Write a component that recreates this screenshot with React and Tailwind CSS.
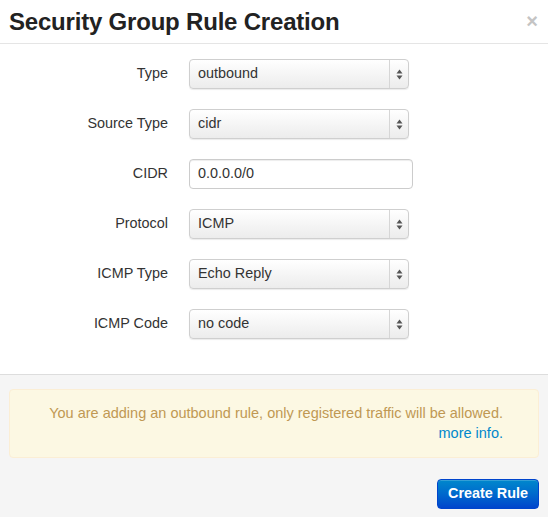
import React from 'react';

const font = { fontFamily: '"Liberation Sans", Arial, sans-serif' };

const Arrows = () => (
  <svg width="7" height="11" viewBox="0 0 7 11" className="text-[#555]">
    <path d="M3.5 0.5 L6.5 4.5 L0.5 4.5 Z" fill="currentColor" />
    <path d="M3.5 10.5 L6.5 6.5 L0.5 6.5 Z" fill="currentColor" />
  </svg>
);

const Select = ({ value }) => (
  <div className="flex h-[30px] w-[220px] items-stretch rounded-[4px] border border-[#cfcfcf] bg-gradient-to-b from-white to-[#ececec] shadow-[0_1px_1px_rgba(0,0,0,0.08)]">
    <div className="flex flex-1 items-center pl-[8px] text-[14.4px] text-[#333]">{value}</div>
    <div className="flex w-[19px] items-center justify-center border-l border-[#d6d6d6]">
      <Arrows />
    </div>
  </div>
);

const Input = ({ value }) => (
  <div className="flex h-[30px] w-[224px] items-center rounded-[4px] border border-[#ccc] bg-white pl-[8px] text-[14.4px] text-[#333] shadow-[inset_0_1px_1px_rgba(0,0,0,0.075)]">
    {value}
  </div>
);

const Row = ({ label, children }) => (
  <div className="flex items-center">
    <label className="w-[169px] pr-[1px] text-right text-[14.4px] text-[#333]">{label}</label>
    <div className="ml-[20px]">{children}</div>
  </div>
);

export default function App() {
  return (
    <div style={font} className="flex h-[517px] w-[548px] flex-col bg-white">
      {/* Header */}
      <div className="flex h-[44px] items-center justify-between border-b border-[#e5e5e5] pl-[9px] pr-[9px]">
        <h3 className="text-[24px] font-bold tracking-[-0.2px] text-[#222]">Security Group Rule Creation</h3>
        <span className="mb-[2px] mr-[1px] text-[20px] font-bold leading-none text-[#c4c4c4]">×</span>
      </div>

      {/* Body */}
      <div className="flex flex-col gap-[20px] pb-[35px] pt-[15px]">
        <Row label="Type"><Select value="outbound" /></Row>
        <Row label="Source Type"><Select value="cidr" /></Row>
        <Row label="CIDR"><Input value="0.0.0.0/0" /></Row>
        <Row label="Protocol"><Select value="ICMP" /></Row>
        <Row label="ICMP Type"><Select value="Echo Reply" /></Row>
        <Row label="ICMP Code"><Select value="no code" /></Row>
      </div>

      {/* Footer */}
      <div className="flex flex-1 flex-col border-t border-[#dddddd] bg-[#f5f5f5] px-[9px] pt-[14px]">
        <div className="rounded-[4px] border border-[#fbeed5] bg-[#fcf8e3] pb-[14px] pl-[14px] pr-[35px] pt-[13px] text-right text-[14.5px] leading-[20px] text-[#c09853]">
          <div>You are adding an outbound rule, only registered traffic will be allowed.</div>
          <a className="text-[#0088cc]">more info.</a>
        </div>
        <div className="mt-[21px] flex justify-end">
          <button className="h-[30px] w-[102px] rounded-[4px] border border-[#0044cc] bg-gradient-to-b from-[#0088cc] to-[#0044cc] text-[14.4px] font-bold text-white shadow-[inset_0_1px_0_rgba(255,255,255,0.2)]">
            Create Rule
          </button>
        </div>
      </div>
    </div>
  );
}
